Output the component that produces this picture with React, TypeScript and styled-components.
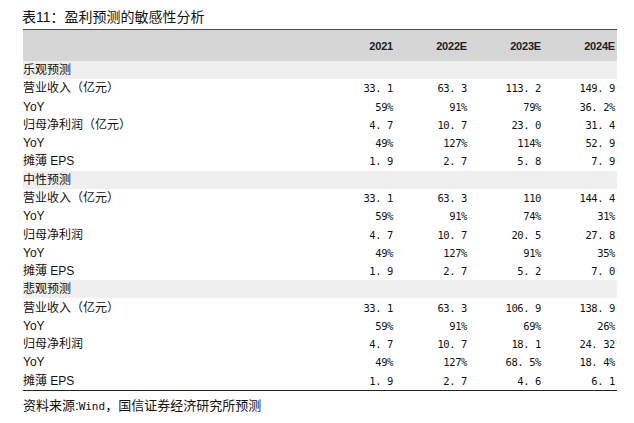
import React from "react";
import styled, { createGlobalStyle } from "styled-components";

const GlobalStyles = createGlobalStyle`
  body {
    margin: 0;
    background: #ffffff;
    font-family: "Liberation Sans", "Noto Sans CJK SC", sans-serif;
    color: #1a1a1a;
  }
`;

const Page = styled.main`
  width: 594px;
  padding: 7px 0 0 23px;
`;

const Title = styled.h1`
  margin: 0 0 0 -1px;
  height: 22px;
  font-size: 14px;
  font-weight: 400;
  line-height: 20px;
  font-family: "Liberation Sans", "Noto Sans CJK SC", sans-serif;
  color: #111;
`;

const Table = styled.div`
  border-top: 1px solid #4a4a4a;
  border-bottom: 1px solid #222;
`;

const Row = styled.div<{ $kind: "head" | "section" | "data" }>`
  display: grid;
  grid-template-columns: 1fr repeat(4, 74px);
  align-items: center;
  height: ${(p) => (p.$kind === "head" ? "31px" : "18.28px")};
  background: ${(p) =>
    p.$kind === "head" ? "#d6d6d6" : p.$kind === "section" ? "#efefef" : "transparent"};
`;

const Label = styled.div`
  font-family: "Liberation Sans", "Noto Sans CJK SC", sans-serif;
  font-size: 12px;
  line-height: 14px;
  white-space: pre;
  color: #111;
`;

const Year = styled.div`
  text-align: right;
  padding-right: 2px;
  font-family: "Liberation Sans", sans-serif;
  font-weight: 700;
  font-size: 11px;
  color: #222;
  letter-spacing: -0.2px;
`;

const Num = styled.div`
  text-align: right;
  padding-right: 2px;
  font-family: "DejaVu Sans Mono", monospace;
  font-size: 10.5px;
  letter-spacing: -0.4px;
  line-height: 14px;
  white-space: pre;
  color: #111;
`;

const Source = styled.p`
  margin: 7px 0 0 0;
  font-family: "Liberation Sans", "Noto Sans CJK SC", sans-serif;
  font-size: 13px;
  line-height: 15px;
  color: #111;
`;

const Mono = styled.span`
  font-family: "DejaVu Sans Mono", monospace;
  font-size: 11px;
`;

type Line = { label: string; values: string[] };

const fmt = (v: string) => v.replace(".", ". ");

const scenarios: { name: string; lines: Line[] }[] = [
  {
    name: "乐观预测",
    lines: [
      { label: "营业收入（亿元）", values: ["33.1", "63.3", "113.2", "149.9"] },
      { label: "YoY", values: ["59%", "91%", "79%", "36.2%"] },
      { label: "归母净利润（亿元）", values: ["4.7", "10.7", "23.0", "31.4"] },
      { label: "YoY", values: ["49%", "127%", "114%", "52.9"] },
      { label: "摊薄 EPS", values: ["1.9", "2.7", "5.8", "7.9"] },
    ],
  },
  {
    name: "中性预测",
    lines: [
      { label: "营业收入（亿元）", values: ["33.1", "63.3", "110", "144.4"] },
      { label: "YoY", values: ["59%", "91%", "74%", "31%"] },
      { label: "归母净利润", values: ["4.7", "10.7", "20.5", "27.8"] },
      { label: "YoY", values: ["49%", "127%", "91%", "35%"] },
      { label: "摊薄 EPS", values: ["1.9", "2.7", "5.2", "7.0"] },
    ],
  },
  {
    name: "悲观预测",
    lines: [
      { label: "营业收入（亿元）", values: ["33.1", "63.3", "106.9", "138.9"] },
      { label: "YoY", values: ["59%", "91%", "69%", "26%"] },
      { label: "归母净利润", values: ["4.7", "10.7", "18.1", "24.32"] },
      { label: "YoY", values: ["49%", "127%", "68.5%", "18.4%"] },
      { label: "摊薄 EPS", values: ["1.9", "2.7", "4.6", "6.1"] },
    ],
  },
];

const years = ["2021", "2022E", "2023E", "2024E"];

export default function App() {
  return (
    <Page>
      <GlobalStyles />
      <Title>表11：盈利预测的敏感性分析</Title>
      <Table>
        <Row $kind="head">
          <div />
          {years.map((y) => (
            <Year key={y}>{y}</Year>
          ))}
        </Row>
        {scenarios.map((s) => (
          <React.Fragment key={s.name}>
            <Row $kind="section">
              <Label>{s.name}</Label>
            </Row>
            {s.lines.map((l, i) => (
              <Row $kind="data" key={i}>
                <Label>{l.label}</Label>
                {l.values.map((v, j) => (
                  <Num key={j}>{fmt(v)}</Num>
                ))}
              </Row>
            ))}
          </React.Fragment>
        ))}
      </Table>
      <Source>
        资料来源:<Mono>Wind</Mono>，国信证券经济研究所预测
      </Source>
    </Page>
  );
}
